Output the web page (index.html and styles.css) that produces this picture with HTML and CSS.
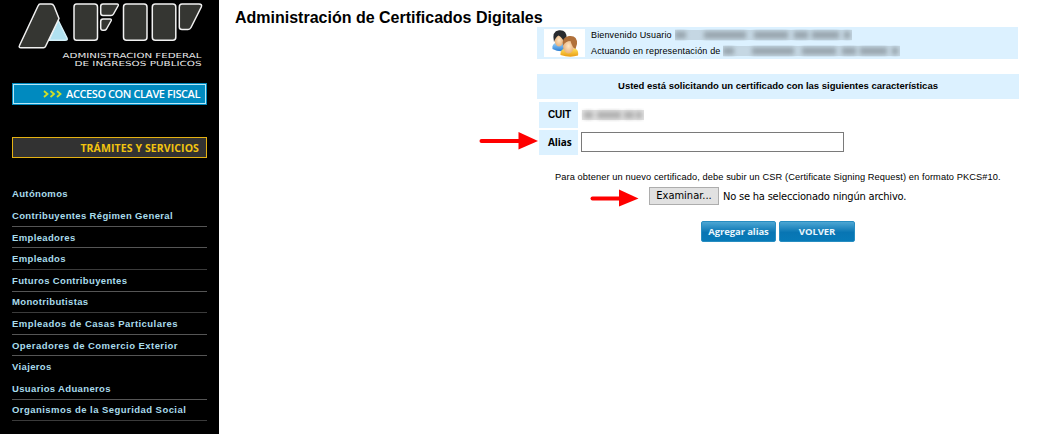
FILE: index.html
```html
<!DOCTYPE html>
<html lang="es">
<head>
<meta charset="utf-8">
<title>Administración de Certificados Digitales</title>
<link rel="stylesheet" href="styles.css">
</head>
<body>
<div class="page">
  <aside class="sidebar">
    <svg class="logo" width="219" height="75" viewBox="0 0 219 75">
      <g fill="#353632" stroke="#f1f1f1" stroke-width="1.5" stroke-linejoin="round">
        <path d="M58 20L67 38Q68 40.3 65 40.3H49Z" fill="#b0e1f0" stroke="#d5f0f8"/>
        <path d="M40 4H51Q53 4 54 6L59 18.5L45.500 46.500Q45 47.700 43.500 47.700H21Q18.400 47.700 19.500 45.500L38 6Q39 4 40 4Z"/>
        <path d="M76.500 4H94.500Q97.500 4 97.500 7V37.500Q97.500 40.300 94.500 40.300H76.500Q74 40.300 74 37.500V7Q74 4 76.500 4Z"/>
        <path d="M103 4H117Q119 4 118 6L113.500 14Q112.700 15.500 111 15.500H103Q100.700 15.500 100.700 13V6.500Q100.700 4 103 4Z"/>
        <path d="M103 19H110Q112 19 111 21L106.500 29Q105.700 30.300 104 30.300H103Q100.700 30.300 100.700 28V21.500Q100.700 19 103 19Z"/>
        <rect x="123.500" y="4" width="23.500" height="36.300" rx="3"/>
        <rect x="152.300" y="4" width="23.500" height="36.300" rx="3"/>
        <path d="M182 4H199Q202.500 4 201.300 7L191 27.500Q190 29.500 188 29.500H182Q179.300 29.500 179.300 27V7Q179.300 4 182 4Z"/>
      </g>
      <g class="logo-text">
        <text x="62.500" y="57.800" textLength="139" lengthAdjust="spacingAndGlyphs">ADMINISTRACION FEDERAL</text>
        <text x="74.500" y="66.300" textLength="127" lengthAdjust="spacingAndGlyphs">DE INGRESOS PUBLICOS</text>
      </g>
    </svg>
    <a class="access">
      <svg class="chevrons" width="19" height="8" viewBox="0 0 19 8"><path d="M1 1L4.500 4L1 7M7.500 1L11 4L7.500 7M14 1L17.500 4L14 7"/></svg>
      <span class="access-label">ACCESO CON CLAVE FISCAL</span>
    </a>
    <a class="services">TRÁMITES Y SERVICIOS</a>
    <nav class="menu">
      <a class="item plain">Autónomos</a>
      <a class="item">Contribuyentes Régimen General</a>
      <a class="item">Empleadores</a>
      <a class="item dim">Empleados</a>
      <a class="item">Futuros Contribuyentes</a>
      <a class="item dim">Monotributistas</a>
      <a class="item wide">Empleados de Casas Particulares</a>
      <a class="item wide">Operadores de Comercio Exterior</a>
      <a class="item plain">Viajeros</a>
      <a class="item">Usuarios Aduaneros</a>
      <a class="item dim wide">Organismos de la Seguridad Social</a>
    </nav>
  </aside>
  <main class="main">
    <h1 class="title">Administración de Certificados Digitales</h1>
    <div class="panel">
      <section class="welcome">
        <div class="avatar">
          <svg width="41" height="28" viewBox="0 0 41 28">
            <defs>
              <linearGradient id="blue" x2="0" y2="1"><stop stop-color="#a0d8ff"/><stop offset="1" stop-color="#2a7cd2"/></linearGradient>
              <linearGradient id="gold" x2="0" y2="1"><stop stop-color="#ffe25c"/><stop offset="1" stop-color="#e99c14"/></linearGradient>
              <radialGradient id="skin"><stop stop-color="#ffe6c4"/><stop offset="1" stop-color="#e8b27c"/></radialGradient>
            </defs>
            <path d="M8.500 20Q7.500 14.500 13 13.500H21Q25 15 24 21Q16 24 8.500 20Z" fill="url(#blue)"/>
            <ellipse cx="15" cy="11" rx="4.500" ry="6.500" fill="url(#skin)"/>
            <path d="M10 13Q7.500 2 15 1.200Q23 .5 22.500 9L20 13Q18 8 14.500 6.500Q11.500 8 10 13Z" fill="#292b2f"/>
            <path d="M16.500 26Q16 20.500 21 19.500H31Q35 21 34 26.500Q26 29 16.500 26Z" fill="url(#gold)"/>
            <ellipse cx="24.500" cy="17" rx="5.500" ry="7.500" fill="url(#skin)"/>
            <path d="M18.800 17Q17.500 8 25 7Q33.500 6 33 15L31.500 20Q28.500 19 26.500 12Q21.500 12 18.800 17Z" fill="#b0703a"/>
          </svg>
        </div>
        <div class="user">
          <p class="user-line"><span class="t-user">Bienvenido Usuario</span>
            <svg class="redacted" width="177" height="12" viewBox="0 0 177 12"><path class="haze" d="M0 6H177"/><path class="ink" d="M0 6H11M29 6H71M79 6H113M119 6H133M137 6H164M169 6H175"/></svg></p>
          <p class="user-line"><span class="t-rep">Actuando en representación de</span>
            <svg class="redacted" width="177" height="12" viewBox="0 0 177 12"><path class="haze" d="M0 6H177"/><path class="ink" d="M0 6H11M29 6H71M79 6H113M119 6H133M137 6H164M169 6H175"/></svg></p>
        </div>
      </section>
      <div class="heading"><span>Usted está solicitando un certificado con las siguientes características</span></div>
      <div class="fields">
        <div class="label cuit">CUIT</div>
        <svg class="redacted cuit-value" width="63" height="14" viewBox="0 0 63 14"><path class="haze" d="M1 7H63"/><path class="ink" d="M3 7H12M16 7H40M43 7H53M55 7H61"/></svg>
        <div class="label alias">Alias</div>
        <input class="input" type="text" aria-label="Alias">
      </div>
      <p class="note">Para obtener un nuevo certificado, debe subir un CSR (Certificate Signing Request) en formato PKCS#10.</p>
      <div class="file">
        <button class="browse">Examinar...</button>
        <span class="file-status">No se ha seleccionado ningún archivo.</span>
      </div>
      <div class="actions">
        <button class="btn add">Agregar alias</button>
        <button class="btn back">VOLVER</button>
      </div>
    </div>
    <svg class="arrow arrow-alias" width="60" height="18" viewBox="0 0 60 18"><path d="M2.500 9H43" stroke="#f00" stroke-width="4" stroke-linecap="round"/><path d="M39.500 0L59 9L39.500 17.500Z" fill="#f00"/></svg>
    <svg class="arrow arrow-file" width="50" height="18" viewBox="0 0 50 18"><path d="M2.500 9.500H32" stroke="#f00" stroke-width="4" stroke-linecap="round"/><path d="M29 .5L48.500 9.500L29 17.500Z" fill="#f00"/></svg>
  </main>
</div>
</body>
</html>
```

FILE: styles.css
```css
* { box-sizing: border-box; }
body { margin: 0; background: #fff; color: #000; font-family: "Liberation Sans", Arial, sans-serif; }
h1, p { margin: 0; font-weight: normal; }
svg { display: block; flex: none; }
.page { display: flex; width: 1041px; height: 434px; overflow: hidden; }

.sidebar { flex: none; width: 219px; background: #000; }
.logo-text { fill: #e8e8e8; font: 7px "DejaVu Sans", sans-serif; }
.access { display: flex; align-items: center; justify-content: flex-end; width: 195px; height: 22px; margin: 8px 0 0 12px; padding: 0 6px 2px 0; gap: 4px; background: #008abf; border: 1px solid #008abf; box-shadow: inset 0 0 0 1px #b5e7f7; color: #fff; font: 600 11px "Open Sans", sans-serif; letter-spacing: -.42px; white-space: nowrap; }
.chevrons { margin-top: 2px; fill: none; stroke: #cfdf2a; stroke-width: 1.800; }
.services { display: flex; align-items: center; justify-content: flex-end; width: 195px; height: 21px; margin: 32px 0 0 12px; padding-right: 7px; background: #323232; border: 1px solid #e5b213; color: #f2c40f; font: bold 10.500px "Open Sans", sans-serif; letter-spacing: .1px; white-space: nowrap; }
.menu { width: 195px; margin: 25.500px 0 0 12px; }
.item { display: flex; align-items: center; height: 21.620px; border-bottom: 1px solid #555; color: #a9dcec; font-size: 9.500px; font-weight: bold; letter-spacing: .35px; white-space: nowrap; }
.item.wide { letter-spacing: .45px; }
.item.dim { border-color: #3b3b3b; }
.item.plain { border-color: transparent; }

.main { position: relative; flex: 1; }
.title { height: 27px; padding: 8px 0 0 16px; font-size: 16px; font-weight: bold; line-height: 19px; white-space: nowrap; }
.panel { width: 482px; margin-left: 318px; }
.welcome { display: flex; width: 481px; height: 32px; padding: 2px 0 2px 7px; background: #dcf1ff; font-size: 9px; letter-spacing: .15px; }
.avatar { flex: none; width: 41px; height: 28px; background: #fff; }
.user { padding-left: 6px; margin-top: -2px; }
.user-line { display: flex; align-items: center; height: 16px; gap: 3px; white-space: nowrap; }
.redacted { fill: none; overflow: hidden; }
.haze { stroke: #c5d7e3; stroke-width: 10; }
.ink { stroke: #98a5ae; stroke-width: 7; filter: blur(2px); }
.heading { height: 25px; margin-top: 15px; background: #dcf1ff; font-size: 9.500px; font-weight: bold; line-height: 24px; text-align: center; white-space: nowrap; }
.fields { display: grid; grid-template: 26px 25px / 39px 263px; gap: 2px 3px; margin: 3px 0 0 2px; align-items: center; }
.label { display: flex; align-items: center; height: 100%; padding: 0 0 1px 9px; background: #dcf1ff; font-size: 10px; font-weight: bold; letter-spacing: -.1px; }
.alias { padding-bottom: 2px; font-family: "Open Sans", sans-serif; font-size: 10px; }
.cuit-value .haze { stroke: #e2e2e2; }
.cuit-value .ink { stroke: #b0b0b0; }
.input { align-self: start; width: 263px; height: 20px; margin: 2px 0 0; border: 1px solid #7a7a7a; background: #fff; }
.note { margin: 17px 0 0 18px; height: 11px; font-size: 9.250px; line-height: 11px; letter-spacing: .1px; white-space: nowrap; }
.file { display: flex; align-items: center; height: 18px; margin: 4px 0 0 112px; gap: 4px; font: 11px "DejaVu Sans Condensed", "DejaVu Sans", sans-serif; font-stretch: condensed; letter-spacing: -.2px; white-space: nowrap; }
.browse { width: 70px; height: 18px; padding: 0; border: 1px solid #adadad; background: #e1e1e1; color: #000; font: inherit; line-height: 14px; }
.actions { display: flex; gap: 3px; margin: 16px 0 0 164px; }
.btn { width: 75px; height: 21px; padding: 0; border: 1px solid #278dc1; border-radius: 2px; background: linear-gradient(#4da6d3, #0875b3 55%, #077ab8); color: #e8f5fc; font: bold 9.500px "Open Sans", sans-serif; letter-spacing: -.1px; white-space: nowrap; }
.btn.back { width: 76px; }
.arrow { position: absolute; }
.arrow-alias { left: 260px; top: 132px; }
.arrow-file { left: 371px; top: 189px; }
```
